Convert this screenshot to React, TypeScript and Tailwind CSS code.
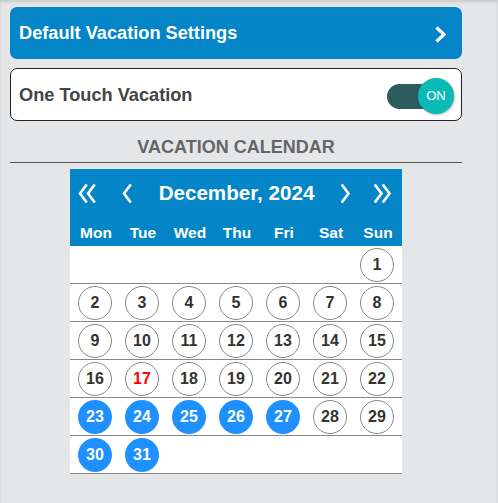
import React from "react";

const days = ["Mon", "Tue", "Wed", "Thu", "Fri", "Sat", "Sun"];
const weeks: (number | null)[][] = [
  [null, null, null, null, null, null, 1],
  [2, 3, 4, 5, 6, 7, 8],
  [9, 10, 11, 12, 13, 14, 15],
  [16, 17, 18, 19, 20, 21, 22],
  [23, 24, 25, 26, 27, 28, 29],
  [30, 31, null, null, null, null, null],
];
const selected = new Set([23, 24, 25, 26, 27, 30, 31]);

function Chevron({ dir, double }: { dir: "left" | "right"; double?: boolean }) {
  const single = (ox: number) =>
    dir === "left" ? `M${ox + 8} 1.5 L${ox + 2} 9.5 L${ox + 8} 17.5` : `M${ox + 1.5} 1.5 L${ox + 7.5} 9.5 L${ox + 1.5} 17.5`;
  return (
    <svg width={double ? 18 : 10} height={19} viewBox={`0 0 ${double ? 18 : 10} 19`} fill="none">
      <path d={single(0)} stroke="white" strokeWidth={2.6} strokeLinecap="square" strokeLinejoin="miter" />
      {double && <path d={single(8)} stroke="white" strokeWidth={2.6} strokeLinecap="square" strokeLinejoin="miter" />}
    </svg>
  );
}

export default function App() {
  return (
    <div
      className="min-h-[503px] w-full bg-[#e5e6e8] pt-[7px] pl-[10px] shadow-[inset_0_2px_3px_rgba(0,0,0,0.12)]"
      style={{ fontFamily: '"Liberation Sans", Arial, sans-serif' }}
    >
      <div className="w-[452px]">
        <div className="flex h-[52px] items-center justify-between rounded-[7px] bg-[#0385c8] pl-[9px] pr-[15px] pt-[2px] text-[18.2px] font-bold text-white">
          <span>Default Vacation Settings</span>
          <svg width="13" height="17" viewBox="0 0 13 17" fill="none">
            <path d="M2.5 1.5 L10 8.5 L2.5 15.5" stroke="white" strokeWidth="3.2" />
          </svg>
        </div>

        <div className="mt-[9px] flex h-[53px] items-center rounded-[7px] border border-[#222] bg-white pl-[8px] pr-[7px] pt-[2px]">
          <span className="text-[18.2px] font-bold text-[#444]">One Touch Vacation</span>
          <div className="relative ml-auto h-[36px] w-[67px]">
            <div className="absolute left-0 top-[6px] h-[25px] w-[52px] rounded-full bg-[#2e5c5e]" />
            <div className="absolute right-0 top-0 flex h-[36px] w-[36px] items-center justify-center rounded-full bg-[#0bb9b7] text-[13px] text-white shadow-[1px_1px_2px_rgba(0,0,0,0.25)]">
              ON
            </div>
          </div>
        </div>

        <div className="mt-[16px] border-b border-[#555] pb-[5px] text-center text-[18px] font-bold leading-[20px] text-[#666]">
          VACATION CALENDAR
        </div>

        <div className="ml-[60px] mt-[6px] w-[332px] bg-white">
          <div className="bg-[#0385c8]">
            <div className="flex h-[48px] items-center pl-[8px] pr-[10px]">
              <Chevron dir="left" double />
              <div className="ml-[26px]">
                <Chevron dir="left" />
              </div>
              <div className="flex-1 text-center text-[20.6px] font-bold text-white">December, 2024</div>
              <Chevron dir="right" />
              <div className="ml-[23px]">
                <Chevron dir="right" double />
              </div>
            </div>
            <div className="grid h-[29px] grid-cols-[repeat(7,47px)] justify-center pt-[3px]">
              {days.map((d) => (
                <div key={d} className="flex items-center justify-center pl-[2px] text-[15.5px] font-bold text-white">
                  {d}
                </div>
              ))}
            </div>
          </div>
          {weeks.map((w, i) => (
            <div key={i} className="grid h-[38px] grid-cols-[repeat(7,47px)] justify-center border-b border-[#888]">
              {w.map((n, j) => (
                <div key={j} className="flex items-center justify-center">
                  {n !== null &&
                    (selected.has(n) ? (
                      <div className="flex h-[34px] w-[34px] items-center justify-center rounded-full bg-[#1e90ff] text-[16px] font-bold text-white">
                        {n}
                      </div>
                    ) : (
                      <div
                        className={`flex h-[34px] w-[34px] items-center justify-center rounded-full border border-[#888] bg-white text-[16px] font-bold ${
                          n === 17 ? "text-[#ff0000]" : "text-[#333]"
                        }`}
                      >
                        {n}
                      </div>
                    ))}
                </div>
              ))}
            </div>
          ))}
        </div>
      </div>
    </div>
  );
}
